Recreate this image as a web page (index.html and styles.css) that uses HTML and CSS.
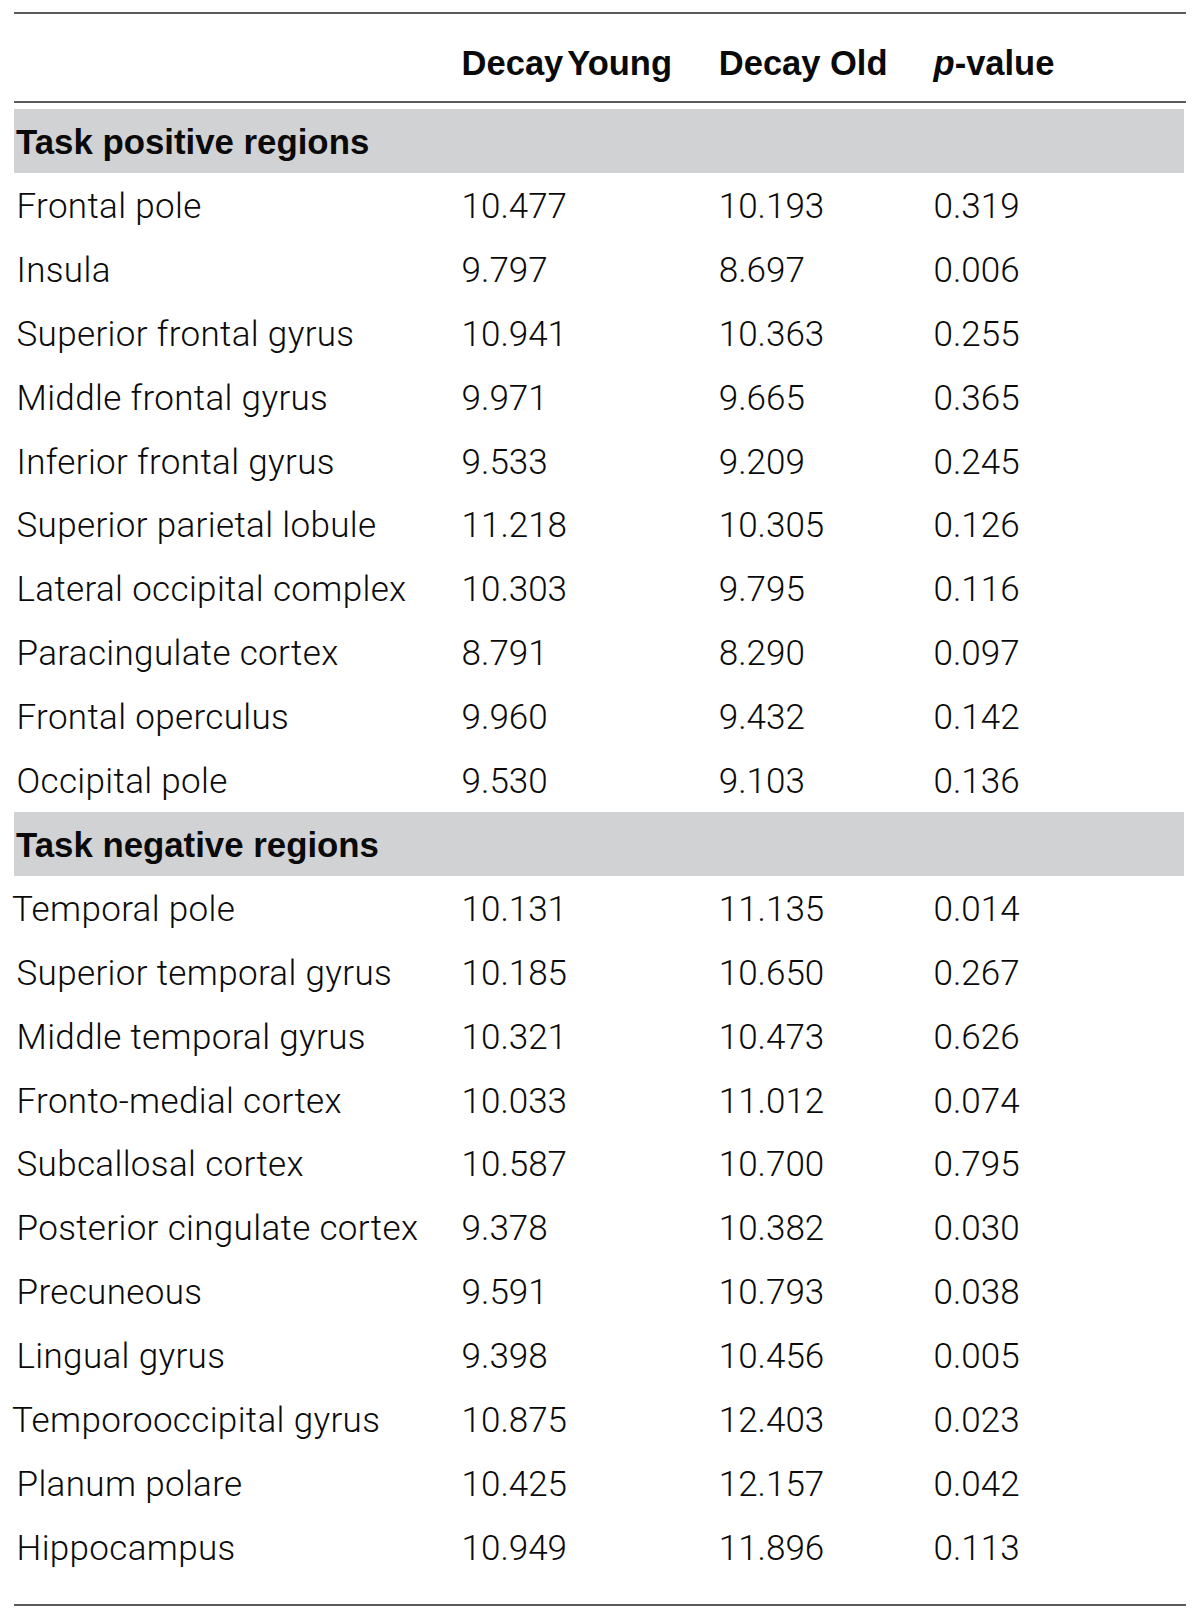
FILE: index.html
```html
<!DOCTYPE html>
<html>
<head>
<meta charset="utf-8">
<link rel="stylesheet" href="styles.css">
</head>
<body>
<div class="table">
  <div class="head">
    <div></div>
    <div class="hcell tight">Decay Young</div>
    <div class="hcell">Decay Old</div>
    <div class="hcell"><i>p</i>-value</div>
  </div>
  <div class="band">Task positive regions</div>
  <div class="row"><div class="lab">Frontal pole</div><div>10.477</div><div>10.193</div><div>0.319</div></div>
  <div class="row"><div class="lab">Insula</div><div>9.797</div><div>8.697</div><div>0.006</div></div>
  <div class="row"><div class="lab">Superior frontal gyrus</div><div>10.941</div><div>10.363</div><div>0.255</div></div>
  <div class="row"><div class="lab">Middle frontal gyrus</div><div>9.971</div><div>9.665</div><div>0.365</div></div>
  <div class="row"><div class="lab">Inferior frontal gyrus</div><div>9.533</div><div>9.209</div><div>0.245</div></div>
  <div class="row"><div class="lab">Superior parietal lobule</div><div>11.218</div><div>10.305</div><div>0.126</div></div>
  <div class="row"><div class="lab">Lateral occipital complex</div><div>10.303</div><div>9.795</div><div>0.116</div></div>
  <div class="row"><div class="lab">Paracingulate cortex</div><div>8.791</div><div>8.290</div><div>0.097</div></div>
  <div class="row"><div class="lab">Frontal operculus</div><div>9.960</div><div>9.432</div><div>0.142</div></div>
  <div class="row"><div class="lab">Occipital pole</div><div>9.530</div><div>9.103</div><div>0.136</div></div>
  <div class="band">Task negative regions</div>
  <div class="row"><div class="lab out">Temporal pole</div><div>10.131</div><div>11.135</div><div>0.014</div></div>
  <div class="row"><div class="lab">Superior temporal gyrus</div><div>10.185</div><div>10.650</div><div>0.267</div></div>
  <div class="row"><div class="lab">Middle temporal gyrus</div><div>10.321</div><div>10.473</div><div>0.626</div></div>
  <div class="row"><div class="lab">Fronto-medial cortex</div><div>10.033</div><div>11.012</div><div>0.074</div></div>
  <div class="row"><div class="lab">Subcallosal cortex</div><div>10.587</div><div>10.700</div><div>0.795</div></div>
  <div class="row"><div class="lab">Posterior cingulate cortex</div><div>9.378</div><div>10.382</div><div>0.030</div></div>
  <div class="row"><div class="lab">Precuneous</div><div>9.591</div><div>10.793</div><div>0.038</div></div>
  <div class="row"><div class="lab">Lingual gyrus</div><div>9.398</div><div>10.456</div><div>0.005</div></div>
  <div class="row"><div class="lab out">Temporooccipital gyrus</div><div>10.875</div><div>12.403</div><div>0.023</div></div>
  <div class="row"><div class="lab">Planum polare</div><div>10.425</div><div>12.157</div><div>0.042</div></div>
  <div class="row"><div class="lab">Hippocampus</div><div>10.949</div><div>11.896</div><div>0.113</div></div>
  <div class="endrule"></div>
</div>
</body>
</html>
```

FILE: styles.css
```css
html, body {
  margin: 0;
  padding: 0;
  background: #ffffff;
}

.table {
  margin: 12px 0 0 14px;
  width: 1172px;
  border-top: 2px solid #5a5a5a;
  color: #0a0a0a;
}

.head {
  display: grid;
  grid-template-columns: 447.6px 257.2px 214.8px 1fr;
  height: 89px;
  align-items: center;
  padding-top: 10px;
  box-sizing: border-box;
  border-bottom: 2px solid #5a5a5a;
  margin-bottom: 6px;
}

.hcell {
  font-family: "Liberation Sans", Arial, sans-serif;
  font-weight: bold;
  font-size: 34.5px;
  line-height: 40px;
}

.hcell.tight {
  word-spacing: -5px;
}

.band {
  background: #d1d2d4;
  height: 64px;
  padding: 5px 0 0 2px;
  box-sizing: border-box;
  margin-right: 2px;
  font-family: "Liberation Sans", Arial, sans-serif;
  font-weight: bold;
  font-size: 34.8px;
  line-height: 56px;
}

.row {
  display: grid;
  grid-template-columns: 447.6px 257.2px 214.8px 1fr;
  height: 63.9px;
  line-height: 58px;
  padding-top: 5px;
  box-sizing: border-box;
  font-family: Roboto, "Liberation Sans", sans-serif;
  font-weight: 300;
  font-size: 35px;
}

.lab {
  padding-left: 2.5px;
  letter-spacing: 0.35px;
}

.lab.out {
  padding-left: 0;
  margin-left: -2px;
}

.endrule {
  margin-top: 25px;
  border-top: 2px solid #5a5a5a;
}
```
